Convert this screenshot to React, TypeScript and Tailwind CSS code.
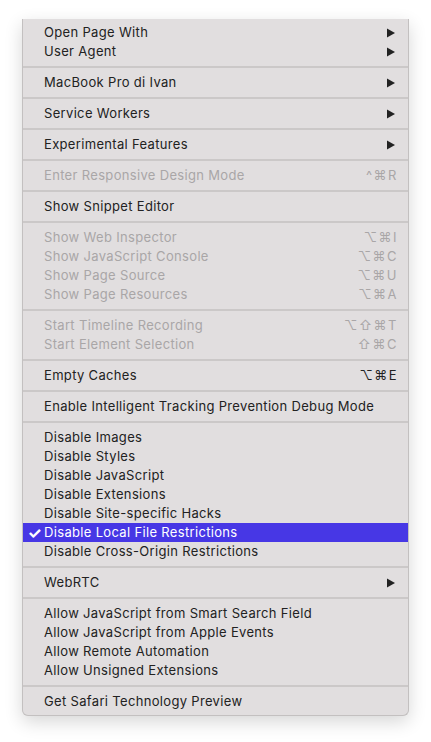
import React from "react";

type Item = {
  label: string;
  disabled?: boolean;
  sub?: boolean;
  shortcut?: string;
  checked?: boolean;
  highlighted?: boolean;
};

const groups: Item[][] = [
  [
    { label: "Open Page With", sub: true },
    { label: "User Agent", sub: true },
  ],
  [{ label: "MacBook Pro di Ivan", sub: true }],
  [{ label: "Service Workers", sub: true }],
  [{ label: "Experimental Features", sub: true }],
  [{ label: "Enter Responsive Design Mode", disabled: true, shortcut: "^⌘R" }],
  [{ label: "Show Snippet Editor" }],
  [
    { label: "Show Web Inspector", disabled: true, shortcut: "⌥⌘I" },
    { label: "Show JavaScript Console", disabled: true, shortcut: "⌥⌘C" },
    { label: "Show Page Source", disabled: true, shortcut: "⌥⌘U" },
    { label: "Show Page Resources", disabled: true, shortcut: "⌥⌘A" },
  ],
  [
    { label: "Start Timeline Recording", disabled: true, shortcut: "⌥⇧⌘T" },
    { label: "Start Element Selection", disabled: true, shortcut: "⇧⌘C" },
  ],
  [{ label: "Empty Caches", shortcut: "⌥⌘E" }],
  [{ label: "Enable Intelligent Tracking Prevention Debug Mode" }],
  [
    { label: "Disable Images" },
    { label: "Disable Styles" },
    { label: "Disable JavaScript" },
    { label: "Disable Extensions" },
    { label: "Disable Site-specific Hacks" },
    { label: "Disable Local File Restrictions", checked: true, highlighted: true },
    { label: "Disable Cross-Origin Restrictions" },
  ],
  [{ label: "WebRTC", sub: true }],
  [
    { label: "Allow JavaScript from Smart Search Field" },
    { label: "Allow JavaScript from Apple Events" },
    { label: "Allow Remote Automation" },
    { label: "Allow Unsigned Extensions" },
  ],
  [{ label: "Get Safari Technology Preview" }],
];

function Row({ item }: { item: Item }) {
  const color = item.highlighted
    ? "text-white bg-[#4737e5]"
    : item.disabled
    ? "text-[#a9a6a7]"
    : "text-[#222222]";
  return (
    <div className={`h-[19px] flex items-center ${color}`}>
      <div className="w-[21px] shrink-0 flex items-center justify-center pl-[2px] text-[16px] font-bold leading-none">
        {item.checked ? "✓" : ""}
      </div>
      <div className="flex-1 truncate tracking-[0.33px]">{item.label}</div>
      {item.shortcut && (
        <div className="pr-[10px] tracking-[1.5px] text-[13px]">{item.shortcut}</div>
      )}
      {item.sub && (
        <div className="pr-[13px] flex items-center">
          <svg width="8" height="10" viewBox="0 0 8 10">
            <polygon points="0,0.5 8,5 0,9.5" fill="#222222" />
          </svg>
        </div>
      )}
    </div>
  );
}

export default function App() {
  return (
    <div
      className="w-[431px] h-[742px] bg-white pl-[22px] pt-[19px]"
      style={{ fontFamily: "Inter, 'DejaVu Sans', sans-serif" }}
    >
      <div className="w-[387px] bg-[#e1dedf] border border-t-0 border-[#c3c0c0] rounded-b-[6px] py-[4px] text-[13px] shadow-[0_6px_18px_rgba(0,0,0,0.16)]">
        {groups.map((g, gi) => (
          <React.Fragment key={gi}>
            {gi > 0 && <div className="my-[5px] h-[2px] bg-[#cbc8c8]" />}
            {g.map((it, ii) => (
              <Row key={ii} item={it} />
            ))}
          </React.Fragment>
        ))}
      </div>
    </div>
  );
}
